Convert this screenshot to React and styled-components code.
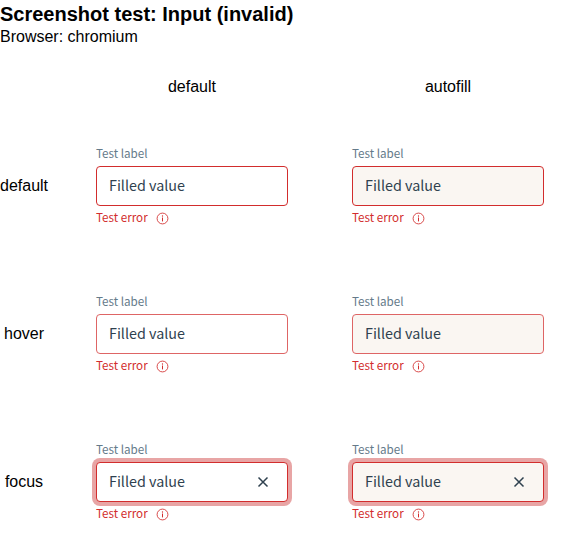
import React from "react";
import styled, { createGlobalStyle, css } from "styled-components";

const GlobalStyle = createGlobalStyle`
  *, *::before, *::after { box-sizing: border-box; }
  body {
    margin: 0;
    overflow: hidden;
    background: #fff;
    color: #000;
    font: 16px/18px "Liberation Sans", Arial, sans-serif;
  }
`;

const Title = styled.h1`
  margin: 0;
  padding-top: 2px;
  font-size: 20px;
  line-height: 25px;
  font-weight: 700;
`;

const Subtitle = styled.p`
  margin: 0;
  padding-top: 1px;
`;

const Matrix = styled.div`
  display: grid;
  grid-template-columns: 48px 256px 256px;
  column-gap: 0;
  grid-template-rows: 34px repeat(3, 148px);
  margin-top: 24px;
  width: 560px;
`;

const ColumnHeading = styled.div`
  padding-top: 8px;
  padding-left: 32px;
  text-align: center;
`;

const RowHeading = styled.div`
  padding-top: 73px;
  text-align: center;
`;

const Field = styled.div`
  display: flex;
  flex-direction: column;
  margin: 39px 16px 0 48px;
  width: 192px;
  font-family: "Noto Sans CJK SC", sans-serif;
`;

const Label = styled.label`
  height: 20px;
  margin-bottom: 3px;
  font-size: 11.65px;
  line-height: 20px;
  color: #647a8a;
`;

const InputBox = styled.div`
  display: flex;
  align-items: center;
  justify-content: space-between;
  height: 40px;
  padding: 0 16px 0 12px;
  border: 1px solid ${(p) => (p.$state === "hover" ? "#de6565" : "#d22d2d")};
  border-radius: 4px;
  background: ${(p) => (p.$autofill ? "#faf6f2" : "#fff")};
  color: #2f414f;
  font-size: 14.35px;
  line-height: 24px;
  ${(p) =>
    p.$state === "focus" &&
    css`
      box-shadow: 0 0 0 4px #e8a5a5;
    `}
`;

const Value = styled.span`
  padding-bottom: 2px;
`;

const ErrorLine = styled.div`
  display: flex;
  align-items: center;
  gap: 8px;
  height: 16px;
  margin-top: 4px;
  color: #d22d2d;
  font-size: 11.65px;
  line-height: 16px;
`;

const ErrorText = styled.span`
  width: 51px;
  padding-bottom: 2px;
  white-space: nowrap;
`;

const Icon = styled.svg`
  display: block;
  flex: none;
`;

function InfoIcon() {
  return (
    <Icon width="14" height="14" viewBox="0 0 14 14" fill="none">
      <circle cx="7.5" cy="7.5" r="5.4" stroke="currentColor" strokeWidth="0.85" />
      <path d="M7.5 6.5V10.4" stroke="currentColor" />
      <circle cx="7.5" cy="5" r="0.65" fill="currentColor" />
    </Icon>
  );
}

function ClearIcon() {
  return (
    <Icon width="16" height="16" viewBox="0 0 16 16" fill="none">
      <path d="M3.5 3.5L12.5 12.5M12.5 3.5L3.5 12.5" stroke="currentColor" strokeWidth="1.5" />
    </Icon>
  );
}

function InvalidInput({ state, autofill }) {
  return (
    <Field>
      <Label>Test label</Label>
      <InputBox $state={state} $autofill={autofill}>
        <Value>Filled value</Value>
        {state === "focus" && <ClearIcon />}
      </InputBox>
      <ErrorLine>
        <ErrorText>Test error</ErrorText>
        <InfoIcon />
      </ErrorLine>
    </Field>
  );
}

const STATES = ["default", "hover", "focus"];

export default function App() {
  return (
    <>
      <GlobalStyle />
      <Title>Screenshot test: Input (invalid)</Title>
      <Subtitle>Browser: chromium</Subtitle>
      <Matrix>
        <span />
        <ColumnHeading>default</ColumnHeading>
        <ColumnHeading>autofill</ColumnHeading>
        {STATES.map((state) => (
          <React.Fragment key={state}>
            <RowHeading>{state}</RowHeading>
            <InvalidInput state={state} />
            <InvalidInput state={state} autofill />
          </React.Fragment>
        ))}
      </Matrix>
    </>
  );
}
